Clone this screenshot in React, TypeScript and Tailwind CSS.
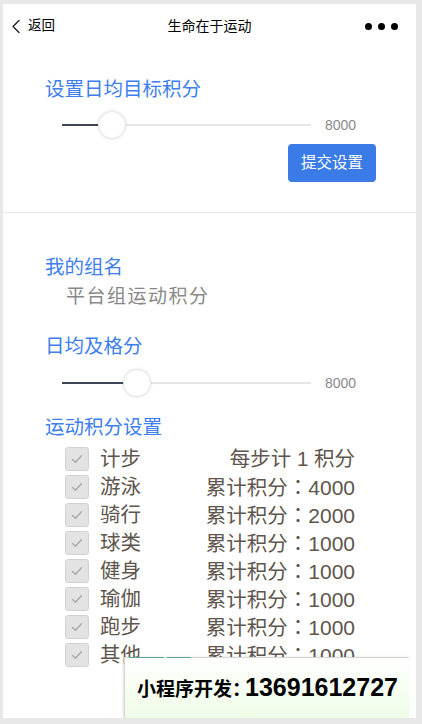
import React from "react";

function Slider({ pos }: { pos: number }) {
  return (
    <div className="flex items-center h-[30px] ml-[17px]">
      <div className="relative w-[249px] h-[30px] flex items-center">
        <div className="w-full h-[2px] bg-[#e6e6e6] flex">
          <div className="h-[2px] bg-[#3d4757]" style={{ width: pos }} />
        </div>
        <div
          className="absolute top-[1px] w-[28px] h-[28px] rounded-full bg-white border border-[#e6e6e6] shadow-[0_0_3px_rgba(0,0,0,0.12)]"
          style={{ left: pos - 14 }}
        />
      </div>
      <span className="ml-[14px] text-[14px] text-[#8a8a8a]">8000</span>
    </div>
  );
}

function Check() {
  return (
    <div className="w-[24px] h-[24px] rounded-[3px] bg-[#e3e3e3] border border-[#d2d2d2] flex items-center justify-center shrink-0">
      <svg width="14" height="14" viewBox="0 0 14 14" fill="none">
        <path d="M2.5 7.5 L5.5 10.2 L11.5 3.8" stroke="#a9a9a9" strokeWidth="1.4" strokeLinecap="round" strokeLinejoin="round" />
      </svg>
    </div>
  );
}

const rows: [string, string | null, string][] = [
  ["计步", null, "每步计 1 积分"],
  ["游泳", "累计积分", "4000"],
  ["骑行", "累计积分", "2000"],
  ["球类", "累计积分", "1000"],
  ["健身", "累计积分", "1000"],
  ["瑜伽", "累计积分", "1000"],
  ["跑步", "累计积分", "1000"],
  ["其他", "累计积分", "1000"],
];

export default function App() {
  return (
    <div className="w-[422px] h-[724px] bg-[#e8e8e8] pt-[4px] pl-[3px] pr-[6px] pb-[6px] font-['Liberation_Sans','Noto_Sans_CJK_SC',sans-serif]">
      <div className="relative w-full h-full bg-white overflow-hidden flex flex-col">
        {/* nav */}
        <div className="h-[44px] flex items-center justify-between px-[7px] shrink-0">
          <div className="flex items-center w-[80px]">
            <svg width="10" height="15" viewBox="0 0 10 15" fill="none" className="ml-[1px]">
              <path d="M8 1.5 L2 7.5 L8 13.5" stroke="#222" strokeWidth="1.4" strokeLinecap="round" strokeLinejoin="round" />
            </svg>
            <span className="ml-[7px] text-[13.5px] text-black">返回</span>
          </div>
          <span className="text-[14px] text-black">生命在于运动</span>
          <div className="w-[80px] flex justify-end items-center gap-[6px] pr-[11px]">
            <span className="w-[7px] h-[7px] rounded-full bg-black" />
            <span className="w-[7px] h-[7px] rounded-full bg-black" />
            <span className="w-[7px] h-[7px] rounded-full bg-black" />
          </div>
        </div>

        {/* section 1 */}
        <div className="pt-[27px] pl-[42px] pr-[40px]">
          <div className="h-[28px] leading-[28px] text-[19.5px] text-[#3d7ef0]">设置日均目标积分</div>
          <div className="mt-[7px]">
            <Slider pos={50} />
          </div>
          <div className="mt-[4px] flex justify-end">
            <button className="w-[88px] h-[38px] rounded-[4px] bg-[#3a7be8] text-white text-[15.5px] flex items-center justify-center">
              提交设置
            </button>
          </div>
        </div>

        <div className="mt-[30px] h-px bg-[#e8e8e8] shrink-0" />

        {/* section 2 */}
        <div className="pt-[40px] pl-[42px]">
          <div className="h-[28px] leading-[28px] text-[19.5px] text-[#3d7ef0]">我的组名</div>
          <div className="mt-[2px] ml-[21px] h-[28px] leading-[28px] text-[19px] tracking-[1.5px] text-[#888]">平台组运动积分</div>
          <div className="mt-[21px] h-[28px] leading-[28px] text-[19.5px] text-[#3d7ef0]">日均及格分</div>
          <div className="mt-[8px]">
            <Slider pos={75} />
          </div>
          <div className="mt-[15px] h-[28px] leading-[28px] text-[19.5px] text-[#3d7ef0]">运动积分设置</div>
          <div className="mt-[4px] ml-[20px] w-[290px] flex flex-col">
            {rows.map(([name, label, val]) => (
              <div key={name} className="h-[28px] flex items-center text-[20.5px] text-[#5e554d]">
                <Check />
                <span className="ml-[11px]">{name}</span>
                <span className="ml-auto">
                  {label ? (
                    <>
                      {label}
                      <span className="font-['Noto_Sans_CJK_TC',sans-serif]">：</span>
                      <span className="text-[21px]">{val}</span>
                    </>
                  ) : (
                    val
                  )}
                </span>
              </div>
            ))}
          </div>
        </div>

        {/* overlay banner */}
        <div className="absolute left-[121px] bottom-0 w-[285px] h-[61px] bg-gradient-to-b from-white to-[#effde6] border-l border-t border-[#d6d6d6] shadow-[-1px_0_2px_rgba(0,0,0,0.12)] flex items-center pl-[12px]">
          <div className="absolute -top-px left-[4px] w-[35px] h-px bg-[#5aa896]" />
          <div className="absolute -top-px left-[42px] w-[24px] h-px bg-[#5aa896]" />
          <span className="font-bold text-black text-[19px] font-['Noto_Sans_CJK_SC',sans-serif]">小程序开发：</span>
          <span className="font-bold text-black text-[25px] -ml-[6px] font-['Liberation_Sans',sans-serif]">13691612727</span>
        </div>
      </div>
    </div>
  );
}
